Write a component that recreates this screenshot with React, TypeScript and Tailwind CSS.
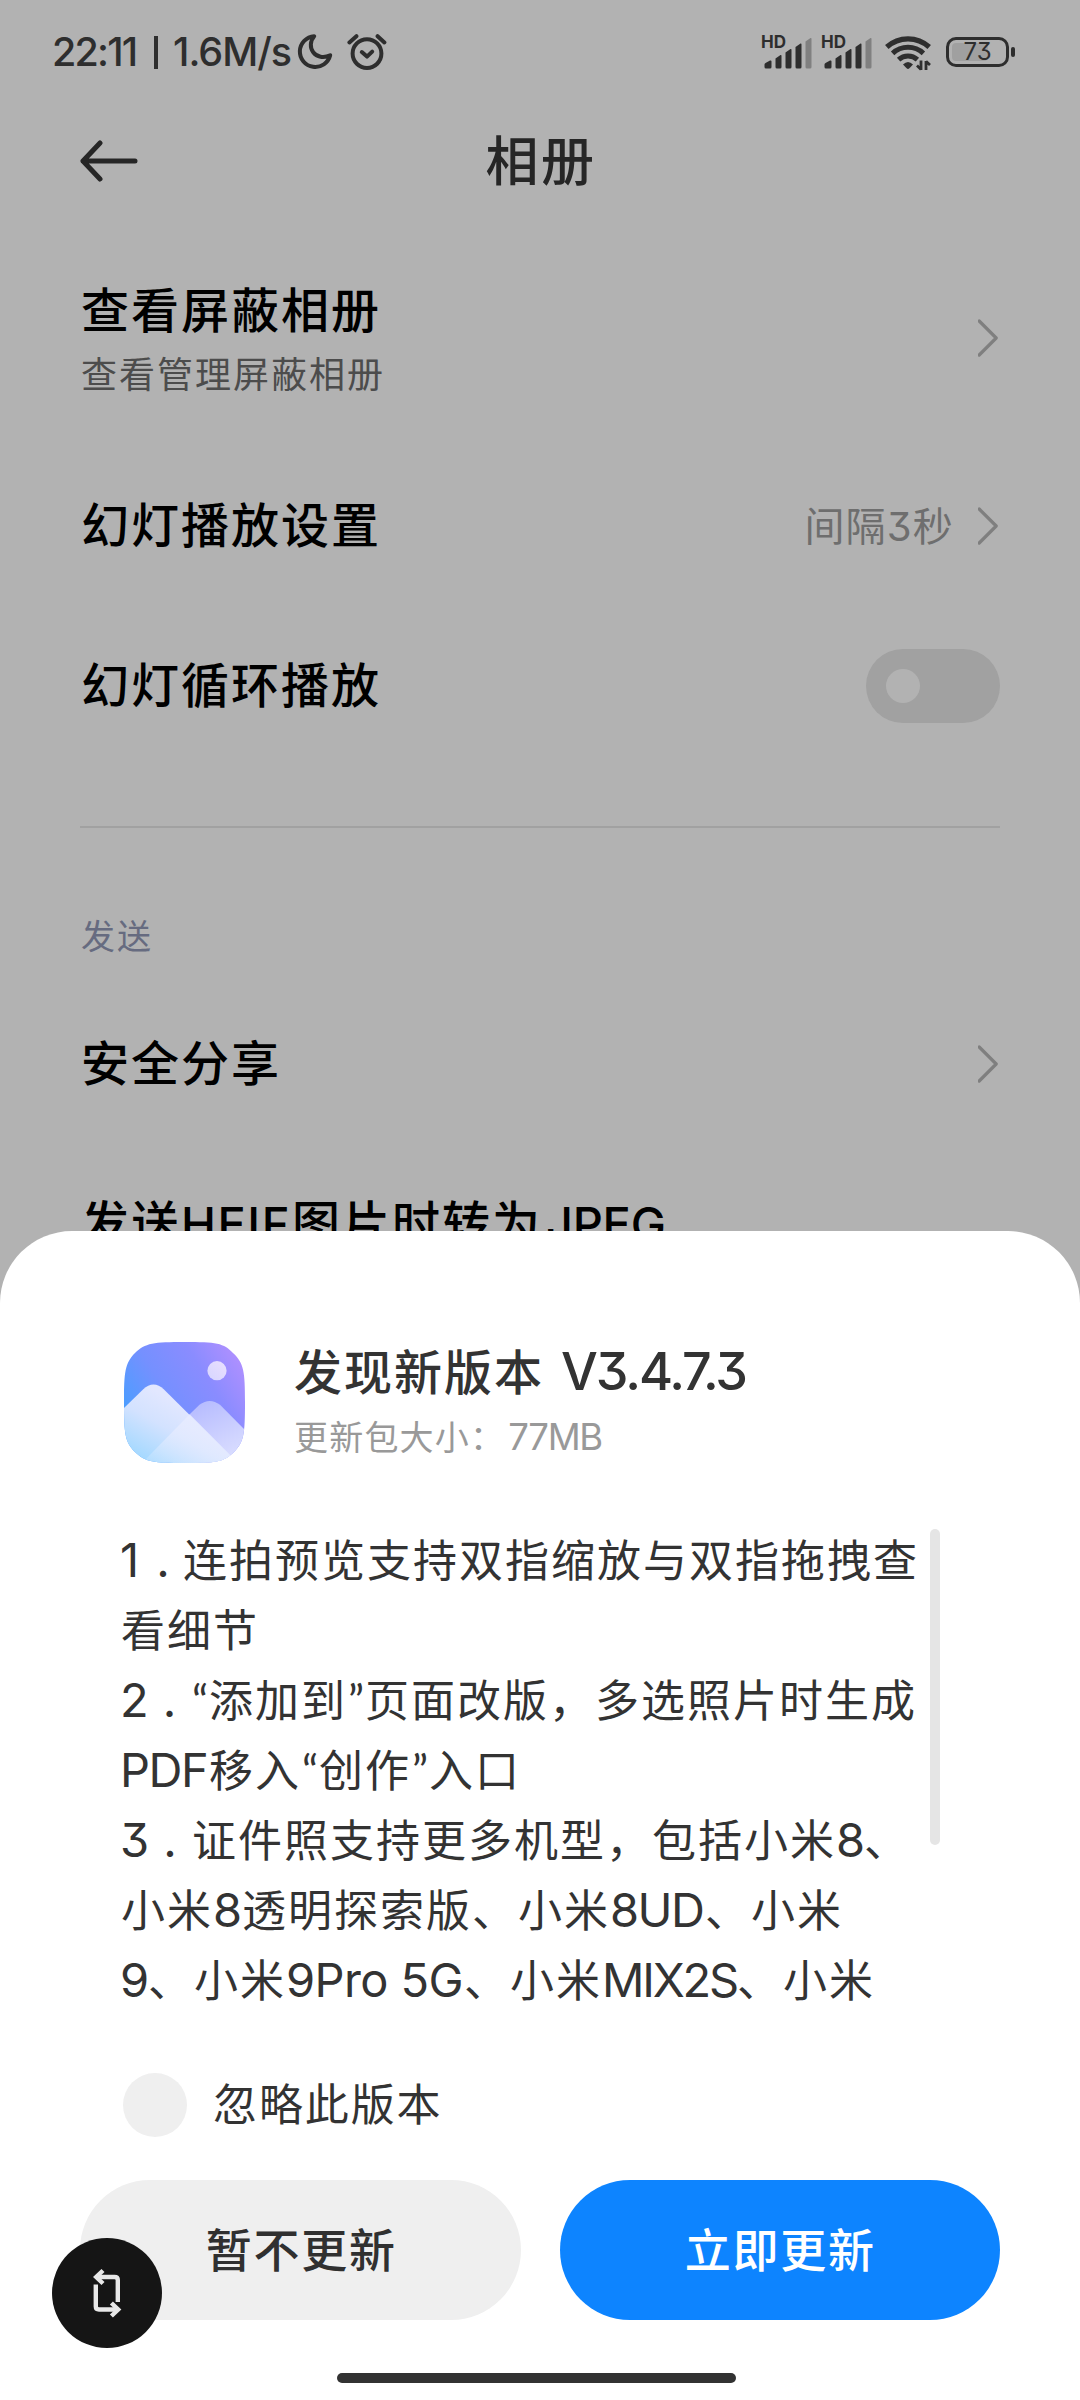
import type { ReactNode } from 'react';

type SettingRowProps = {
  title: ReactNode;
  subtitle?: string;
  children?: ReactNode;
  className?: string;
};

function MoonIcon() {
  return (
    <svg width="36" height="38" viewBox="0 0 36 38" fill="none">
      <path
        d="M17.2 3.2A15.4 15.4 0 1 0 33.2 22.3C26.5 25.4 19.8 24 16.2 19.2C12.8 14.6 13 8 17.2 3.2Z"
        stroke="#2e2e2e"
        strokeWidth="4"
        strokeLinejoin="round"
      />
    </svg>
  );
}

function AlarmIcon() {
  return (
    <svg
      width="40"
      height="38"
      viewBox="0 0 40 38"
      fill="none"
      stroke="#2e2e2e"
      strokeWidth="4"
      strokeLinecap="round"
      strokeLinejoin="round"
    >
      <circle cx="20" cy="20.6" r="14.4" />
      <path d="M14.8 19L20 23.6L25.2 18.6" />
      <path d="M2.4 9.4L9.4 3.2" />
      <path d="M30.6 3.2L37.4 9.4" />
    </svg>
  );
}

function SignalIcon() {
  return (
    <div className="relative h-[34px] w-[52px]">
      <svg width="52" height="34" viewBox="0 0 52 34" fill="#2e2e2e">
        <path d="M2.5 29.5Q2.5 28.5 3.5 28L8 25.5Q9.5 25 9.5 26.5V32Q9.5 33.5 8 33.5H4Q2.5 33.5 2.5 32Z" />
        <path d="M13.5 23.5L18.5 20Q19.5 19.6 19.5 21V32Q19.5 33.5 18 33.5H15Q13.5 33.5 13.5 32Z" />
        <path d="M23.5 17.5L28.5 14Q29.5 13.6 29.5 15V32Q29.5 33.5 28 33.5H25Q23.5 33.5 23.5 32Z" />
        <path d="M33.5 12L38.5 8.5Q39.5 8.1 39.5 9.5V32Q39.5 33.5 38 33.5H35Q33.5 33.5 33.5 32Z" />
        <path
          fill="#808080"
          d="M43.5 6.5L48.5 3Q49.5 2.6 49.5 4V32Q49.5 33.5 48 33.5H45Q43.5 33.5 43.5 32Z"
        />
      </svg>
      <span className="absolute -top-px left-[-1px] text-[17px] leading-[16px] font-bold">HD</span>
    </div>
  );
}

function WifiIcon() {
  return (
    <svg width="46" height="36" viewBox="0 0 46 36" fill="none" stroke="#2e2e2e">
      <path d="M1.8 12A31.5 31.5 0 0 1 44.2 12" strokeWidth="5.2" />
      <path d="M7.6 18.4A22.6 22.6 0 0 1 38.4 18.4" strokeWidth="5" />
      <path d="M13.6 24.6A14 14 0 0 1 32.4 24.6" strokeWidth="5" />
      <path
        d="M18 29.4Q23 24.4 28 29.4L24.4 33.2Q23 34.6 21.6 33.2Z"
        fill="#2e2e2e"
        stroke="none"
      />
      <path d="M36 25.5V35M36 34.4L32 30.6M41 35V26M41 26.4L45 30" strokeWidth="2.8" />
    </svg>
  );
}

function BatteryIcon() {
  return (
    <div className="flex items-center gap-[2px]">
      <div className="relative h-[30px] w-[63px] rounded-[10px] border-[3.5px] border-[#2e2e2e] p-[3px]">
        <div className="h-full w-[36px] rounded-[4px] bg-[#a0a0a0]" />
        <span className="absolute inset-0 flex items-center justify-center text-[24px] leading-none">
          73
        </span>
      </div>
      <div className="h-[10px] w-[4px] rounded-full bg-[#2e2e2e]" />
    </div>
  );
}

function StatusBar() {
  return (
    <div className="flex h-[104px] items-center justify-between pr-[65px] pl-[52px] text-[#2e2e2e]">
      <div className="flex items-center text-[39.5px] leading-none font-medium">
        <span className="w-[102px] pt-[2px] tracking-[-1.8px]">22:11</span>
        <div className="h-[33px] w-[4px] bg-[#2e2e2e]" />
        <span className="ml-[15px] w-[124px] pt-[2px] tracking-[-1px]">1.6M/s</span>
        <MoonIcon />
        <div className="ml-[14px]">
          <AlarmIcon />
        </div>
      </div>
      <div className="flex items-center">
        <SignalIcon />
        <div className="ml-[8px]">
          <SignalIcon />
        </div>
        <div className="mt-px mr-[15px] ml-[11px]">
          <WifiIcon />
        </div>
        <BatteryIcon />
      </div>
    </div>
  );
}

function ChevronIcon() {
  return (
    <svg width="22" height="40" viewBox="0 0 22 40" fill="none">
      <path
        d="M1.2 3L18.2 20L1.2 37"
        stroke="#7f7f7f"
        strokeWidth="3.2"
        strokeLinecap="round"
        strokeLinejoin="round"
      />
    </svg>
  );
}

function SettingRow({ title, subtitle, children, className = 'h-[160px]' }: SettingRowProps) {
  return (
    <div className={`flex items-center justify-between ${className}`}>
      <div className={subtitle ? 'pt-[10px] pl-px' : 'pl-px'}>
        <p className="text-[48px] leading-[64px] font-medium tracking-[2px] text-black">{title}</p>
        {subtitle ? (
          <p className="text-[36px] leading-[64px] tracking-[2px] text-[#4c4c4c]">{subtitle}</p>
        ) : null}
      </div>
      {children}
    </div>
  );
}

function GalleryIcon() {
  return (
    <svg width="121" height="121" viewBox="0 0 121 121">
      <defs>
        <linearGradient id="sky" x1="0" y1="0.56" x2="0.9" y2="0">
          <stop offset="0" stopColor="#4a9eff" />
          <stop offset="0.35" stopColor="#7590ff" />
          <stop offset="0.68" stopColor="#8a8cff" />
          <stop offset="1" stopColor="#b190ff" />
        </linearGradient>
        <linearGradient id="front" x1="0.05" y1="0.9" x2="0.55" y2="0.3">
          <stop offset="0" stopColor="#a0d8ff" />
          <stop offset="0.6" stopColor="#d3e2ff" />
          <stop offset="1" stopColor="#e2e7ff" />
        </linearGradient>
        <linearGradient id="back" x1="0.4" y1="0" x2="0.9" y2="1">
          <stop offset="0" stopColor="#b8bdff" />
          <stop offset="0.6" stopColor="#cfd3ff" />
          <stop offset="1" stopColor="#dde1ff" />
        </linearGradient>
        <linearGradient id="overlap" x1="0" y1="1" x2="0.6" y2="0.4">
          <stop offset="0" stopColor="#e8f1ff" stopOpacity="0.15" />
          <stop offset="1" stopColor="#e8ecff" stopOpacity="0.75" />
        </linearGradient>
        <linearGradient id="sun" x1="0" y1="1" x2="1" y2="0">
          <stop offset="0" stopColor="#d6d6ff" />
          <stop offset="1" stopColor="#eadfff" />
        </linearGradient>
        <clipPath id="tile">
          <path d="M60.5 0C92 0 100 1 109 11C120 21 121 30 121 60.5C121 92 120 100 110 110C100 120 92 121 60.5 121C30 121 21 120 11 110C1 100 0 92 0 60.5C0 30 1 21 11 11C21 1 30 0 60.5 0Z" />
        </clipPath>
      </defs>
      <g clipPath="url(#tile)">
        <rect width="121" height="121" fill="url(#sky)" />
        <circle cx="93" cy="28.7" r="9.6" fill="url(#sun)" />
        <path d="M65.7 72.3L75.5 62.8Q85.7 55 96 62.8L121 88V121H60Z" fill="url(#back)" />
        <path d="M0 66L19 47.5Q29.5 37.5 40 47.5L114 121H0Z" fill="url(#front)" />
        <path d="M18 121L65.7 72.3L114 121Z" fill="url(#overlap)" />
      </g>
    </svg>
  );
}

// Latin run with a fixed advance, so that the characters after it keep their column
function Run({ className, children }: { className: string; children: ReactNode }) {
  return (
    <span className={`inline-block text-[47px] leading-none whitespace-nowrap ${className}`}>
      {children}
    </span>
  );
}

function Quote({ children }: { children: string }) {
  return (
    <span className="inline-block w-[18px] text-center font-['Lato'] text-[44px] leading-none tracking-normal">
      {children}
    </span>
  );
}

function Changelog() {
  return (
    <div className="h-[490px] w-[799px] text-[44px] leading-[70px] tracking-[2px] whitespace-nowrap text-[#333333]">
      <p>
        <Run className="-ml-px w-[63px]">
          1<span className="ml-[15px]">.</span>
        </Run>
        连拍预览支持双指缩放与双指拖拽查
      </p>
      <p>看细节</p>
      <p>
        <Run className="-ml-px w-[71px]">
          2<span className="ml-[12px]">.</span>
        </Run>
        <Quote>“</Quote>
        添加到
        <Quote>”</Quote>
        页面改版，多选照片时生成
      </p>
      <p>
        <Run className="-ml-px w-[89px] tracking-[-1.5px]">PDF</Run>
        移入
        <Quote>“</Quote>
        创作
        <Quote>”</Quote>
        入口
      </p>
      <p>
        <Run className="-ml-px w-[72px]">
          3<span className="ml-[12px]">.</span>
        </Run>
        证件照支持更多机型，包括小米
        <Run className="w-[28px] tracking-normal">8</Run>、
      </p>
      <p>
        小米
        <Run className="w-[29px] tracking-normal">8</Run>
        透明探索版、小米
        <Run className="w-[95px] tracking-[-1.5px]">8UD</Run>
        、小米
      </p>
      <p>
        <Run className="-ml-px w-[28px] tracking-normal">9</Run>
        、小米
        <Run className="w-[178px] tracking-[-0.6px]">9Pro 5G</Run>
        、小米
        <Run className="w-[135px] tracking-[-2.2px]">MIX2S</Run>
        、小米
      </p>
    </div>
  );
}

function UpdateSheet() {
  return (
    <section className="absolute inset-x-0 bottom-0 h-[1169px] rounded-t-[72px] bg-white px-[80px]">
      <div className="flex h-[235px] px-[44px] pt-[111px]">
        <GalleryIcon />
        <div className="ml-[49px]">
          <h2 className="-mt-px text-[48px] leading-[64px] font-medium tracking-[2px] whitespace-nowrap text-[#333333]">
            发现新版本
            <span className="ml-[17px] text-[52px] leading-none tracking-[-2.1px]">V3.4.7.3</span>
          </h2>
          <p className="mt-[3px] text-[34px] leading-[60px] tracking-[1.2px] whitespace-nowrap text-[#999999]">
            更新包大小：
            <span className="ml-[3px] text-[36.5px] leading-none tracking-[-1.3px]">77MB</span>
          </p>
        </div>
      </div>

      <div className="mt-[60px] flex pl-[41px]">
        <Changelog />
        <div className="mt-[3px] ml-[10px] h-[316px] w-[10px] rounded-full bg-[#e5e5e5]" />
      </div>

      <label className="mt-[57px] flex h-[64px] items-center pl-[43px]">
        <span className="size-[64px] rounded-full bg-[#efefef]" />
        <span className="ml-[26px] text-[44px] leading-none tracking-[1.9px] text-[#333333]">
          忽略此版本
        </span>
      </label>

      <div className="mt-[43px] grid grid-cols-2 gap-[39px] text-[46px] font-medium tracking-[1.7px]">
        <button className="h-[140px] rounded-full bg-[#efefef] pl-[2px] text-[#303030]">
          暂不更新
        </button>
        <button className="h-[140px] rounded-full bg-[#0d84ff] pl-px text-white">立即更新</button>
      </div>

      <div className="mt-[53px] ml-[257px] h-[10px] w-[399px] rounded-full bg-[#323232]" />
    </section>
  );
}

function RotateButton() {
  return (
    <button className="absolute top-[2238px] left-[52px] flex size-[110px] items-center justify-center rounded-full bg-[#151515]">
      <svg width="30" height="50" viewBox="0 0 30 50" fill="none" stroke="#e8e8e8" strokeWidth="4.4">
        <path d="M4 9H22.5Q25.8 9 25.8 12V34" />
        <path d="M11 2.5L4.2 9L11 15.5" />
        <path d="M26 41.5H7Q3.8 41.5 3.8 38.5V16.5" />
        <path d="M19.4 35L26.2 41.5L19.4 48" />
      </svg>
    </button>
  );
}

export default function App() {
  return (
    <main className="relative h-[2400px] w-[1080px] overflow-hidden bg-[#b2b2b2] font-['Inter','Noto_Sans_CJK_SC',sans-serif] [font-feature-settings:'cv09']">
      <StatusBar />

      <header className="grid h-[112px] grid-cols-3 items-center px-[80px] pt-px">
        <svg width="58" height="42" viewBox="0 0 58 42" fill="none">
          <path
            d="M20 3L3 21L20 39M3 21H55"
            stroke="#262626"
            strokeWidth="5"
            strokeLinecap="round"
            strokeLinejoin="round"
          />
        </svg>
        <h1 className="pt-[3px] pl-[2px] text-center text-[53px] leading-none font-medium tracking-[2.4px] text-[#262626]">
          相册
        </h1>
      </header>

      <div className="px-[80px]">
        <SettingRow
          title="查看屏蔽相册"
          subtitle="查看管理屏蔽相册"
          className="mt-[14px] h-[216px]"
        >
          <ChevronIcon />
        </SettingRow>
        <SettingRow title="幻灯播放设置">
          <div className="flex items-center">
            <span className="mr-[24px] pt-px text-[40px] leading-none tracking-[1.2px] text-[#6e6e6e]">
              间隔3秒
            </span>
            <ChevronIcon />
          </div>
        </SettingRow>
        <SettingRow title="幻灯循环播放">
          <div className="flex h-[74px] w-[134px] items-center rounded-full bg-[#a1a1a1] pl-[20px]">
            <div className="size-[34px] rounded-full bg-[#b2b2b2]" />
          </div>
        </SettingRow>

        <div className="mt-[60px] h-[2px] bg-[#a1a1a1]" />

        <p className="h-[156px] pt-[79px] pl-px text-[34px] leading-[60px] tracking-[1.9px] text-[#666b80]">
          发送
        </p>
        <SettingRow title="安全分享">
          <ChevronIcon />
        </SettingRow>
        <SettingRow
          title={
            <>
              发送
              <Run className="w-[111px] tracking-[1.5px]">HEIF</Run>
              图片时转为
              <Run className="ml-[4px] tracking-[-0.3px]">JPEG</Run>
            </>
          }
        />
      </div>

      <UpdateSheet />
      <RotateButton />
    </main>
  );
}
